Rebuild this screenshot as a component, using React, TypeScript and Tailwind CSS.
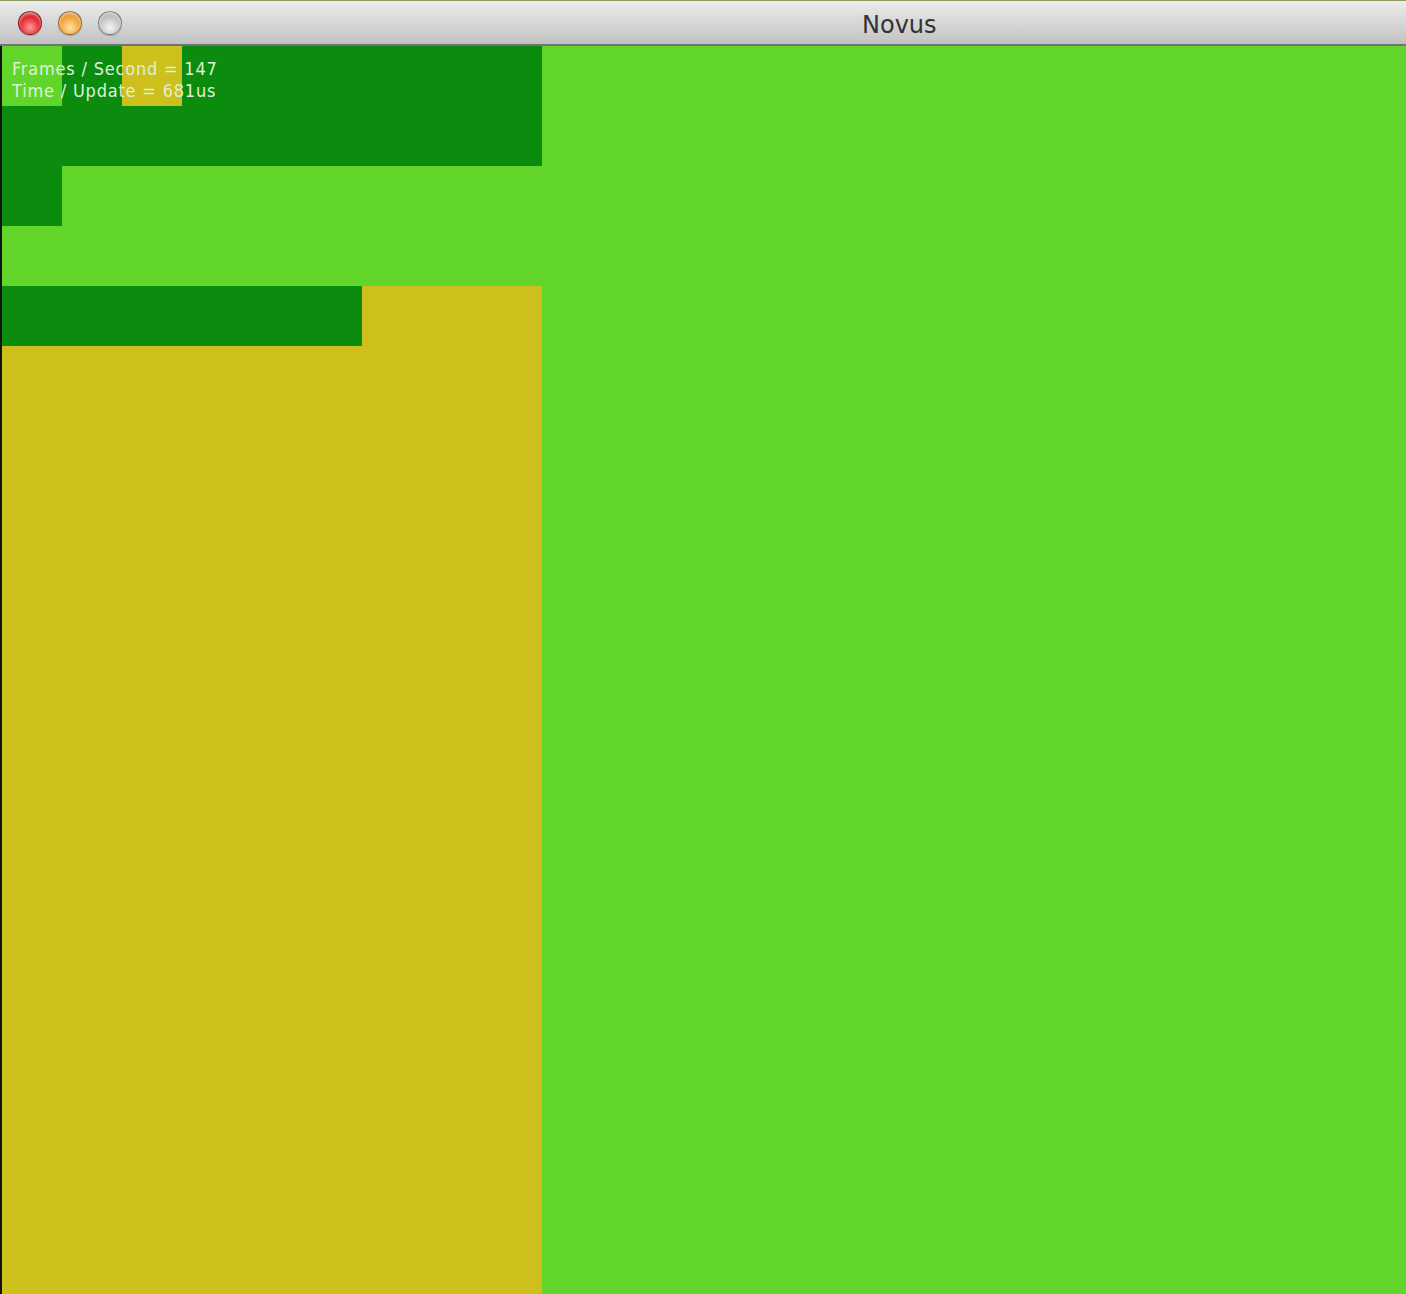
import React from "react";

const L = "bg-[#62d52b]";
const D = "bg-[#0c8c0e]";
const Y = "bg-[#cdbf1c]";

// tile map for the top of the left panel, 9 columns x 5 rows of 60px
const rows: string[][] = [
  [L, D, Y, D, D, D, D, D, D],
  [D, D, D, D, D, D, D, D, D],
  [D, L, L, L, L, L, L, L, L],
  [L, L, L, L, L, L, L, L, L],
  [D, D, D, D, D, D, Y, Y, Y],
];

const TrafficLight = ({ color }: { color: string }) => (
  <div
    className={`w-6 h-6 rounded-full border border-black/30 shadow-[inset_0_2px_3px_rgba(255,255,255,0.6),0_1px_1px_rgba(0,0,0,0.2)] ${color}`}
  />
);

export default function App() {
  return (
    <div className="w-[1406px] h-[1294px] flex flex-col overflow-hidden bg-[#62d52b]">
      <div className="h-[46px] shrink-0 flex items-center relative border-t border-[#8f9a5c] border-b-2 border-b-[#737373] bg-gradient-to-b from-[#ececec] to-[#c2c2c2]">
        <div className="flex items-center gap-4 pl-[18px]">
          <TrafficLight color="bg-[radial-gradient(circle_at_50%_70%,#ff9a9a,#e0262c_55%,#9a1015)]" />
          <TrafficLight color="bg-[radial-gradient(circle_at_50%_70%,#ffe3a0,#f0a23a_55%,#b26a10)]" />
          <TrafficLight color="bg-[radial-gradient(circle_at_50%_70%,#f5f5f5,#c2c2c2_55%,#8a8a8a)]" />
        </div>
        <div
          className="absolute left-[862px] top-[10px] text-[24px] leading-[28px] text-[#333]"
          style={{ fontFamily: '"DejaVu Sans", sans-serif' }}
        >
          Novus
        </div>
      </div>
      <div className="flex flex-1 min-h-0">
        <div className="w-[2px] bg-[#111] shrink-0" />
        <div className="w-[540px] flex flex-col relative">
          {rows.map((r, i) => (
            <div key={i} className="grid grid-cols-9 h-[60px]">
              {r.map((c, j) => (
                <div key={j} className={c} />
              ))}
            </div>
          ))}
          <div className={`flex-1 ${Y}`} />
          <div
            className="absolute left-[10px] top-[12px] text-[18px] leading-[22px] text-[#dff0d8] tracking-[0.8px]"
            style={{ fontFamily: '"DejaVu Sans Condensed", "Liberation Sans Narrow", sans-serif' }}
          >
            <div>Frames / Second = 147</div>
            <div>Time / Update = 681us</div>
          </div>
        </div>
        <div className="flex-1" />
      </div>
    </div>
  );
}
